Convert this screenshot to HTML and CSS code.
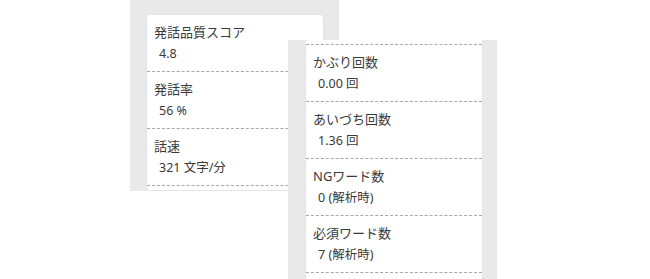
FILE: index.html
```html
<!DOCTYPE html>
<html lang="ja">
<head>
    <meta charset="UTF-8">
    <meta name="viewport" content="width=device-width, initial-scale=1.0">
    <title>発話スコア</title>
    <link rel="stylesheet" href="styles.css">
</head>
<body>
    <div class="board">
        <!-- 左パネル -->
        <div class="panel panel-left">
            <div class="card">
                <div class="row">
                    <div class="label">発話品質スコア</div>
                    <div class="value">4.8</div>
                </div>
                <div class="row">
                    <div class="label">発話率</div>
                    <div class="value">56 %</div>
                </div>
                <div class="row">
                    <div class="label">話速</div>
                    <div class="value">321 文字/分</div>
                </div>
            </div>
        </div>

        <!-- 右パネル (重なり) -->
        <div class="panel panel-right">
            <div class="card card-open">
                <div class="row-edge"></div>
                <div class="row">
                    <div class="label">かぶり回数</div>
                    <div class="value">0.00 回</div>
                </div>
                <div class="row">
                    <div class="label">あいづち回数</div>
                    <div class="value">1.36 回</div>
                </div>
                <div class="row">
                    <div class="label">NGワード数</div>
                    <div class="value">0 (解析時)</div>
                </div>
                <div class="row">
                    <div class="label">必須ワード数</div>
                    <div class="value">7 (解析時)</div>
                </div>
            </div>
        </div>
    </div>
</body>
</html>
```

FILE: styles.css
```css
body {
    font-family: "Noto Sans", "Noto Sans CJK JP", sans-serif;
    background-color: #ffffff;
    color: #3a3a3a;
    margin: 0;
    padding: 0;
}

.board {
    display: flex;
    align-items: flex-start;
    padding-left: 130px;
}

.panel {
    width: 209px;
    background-color: #e9e9e9;
    padding: 0 15px 0 16px;
    box-sizing: border-box;
    overflow: hidden;
}

.panel-left {
    height: 191px;
    padding-top: 14px;
}

/* le panneau de droite passe par-dessus */
.panel-right {
    height: 239px;
    margin-top: 40px;
    margin-left: -51px;
    padding: 0 14px 0 17px;
}

.card {
    background-color: white;
    border: 1px solid #dfe4ee;
    border-radius: 4px;
    height: 100%;
    box-sizing: border-box;
    overflow: hidden;
}

.card-open {
    border-top: none;
    border-bottom: none;
    border-radius: 0;
}

.row-edge {
    height: 4px;
    border-bottom: 1px dashed #a8a8a8;
}

.row {
    padding: 7px 0 7px 7px;
    border-bottom: 1px dashed #a8a8a8;
}

.label {
    font-size: 13px;
    line-height: 20px;
}

.value {
    font-size: 12.5px;
    line-height: 20px;
    margin-top: 2px;
    padding-left: 5px;
}
```
